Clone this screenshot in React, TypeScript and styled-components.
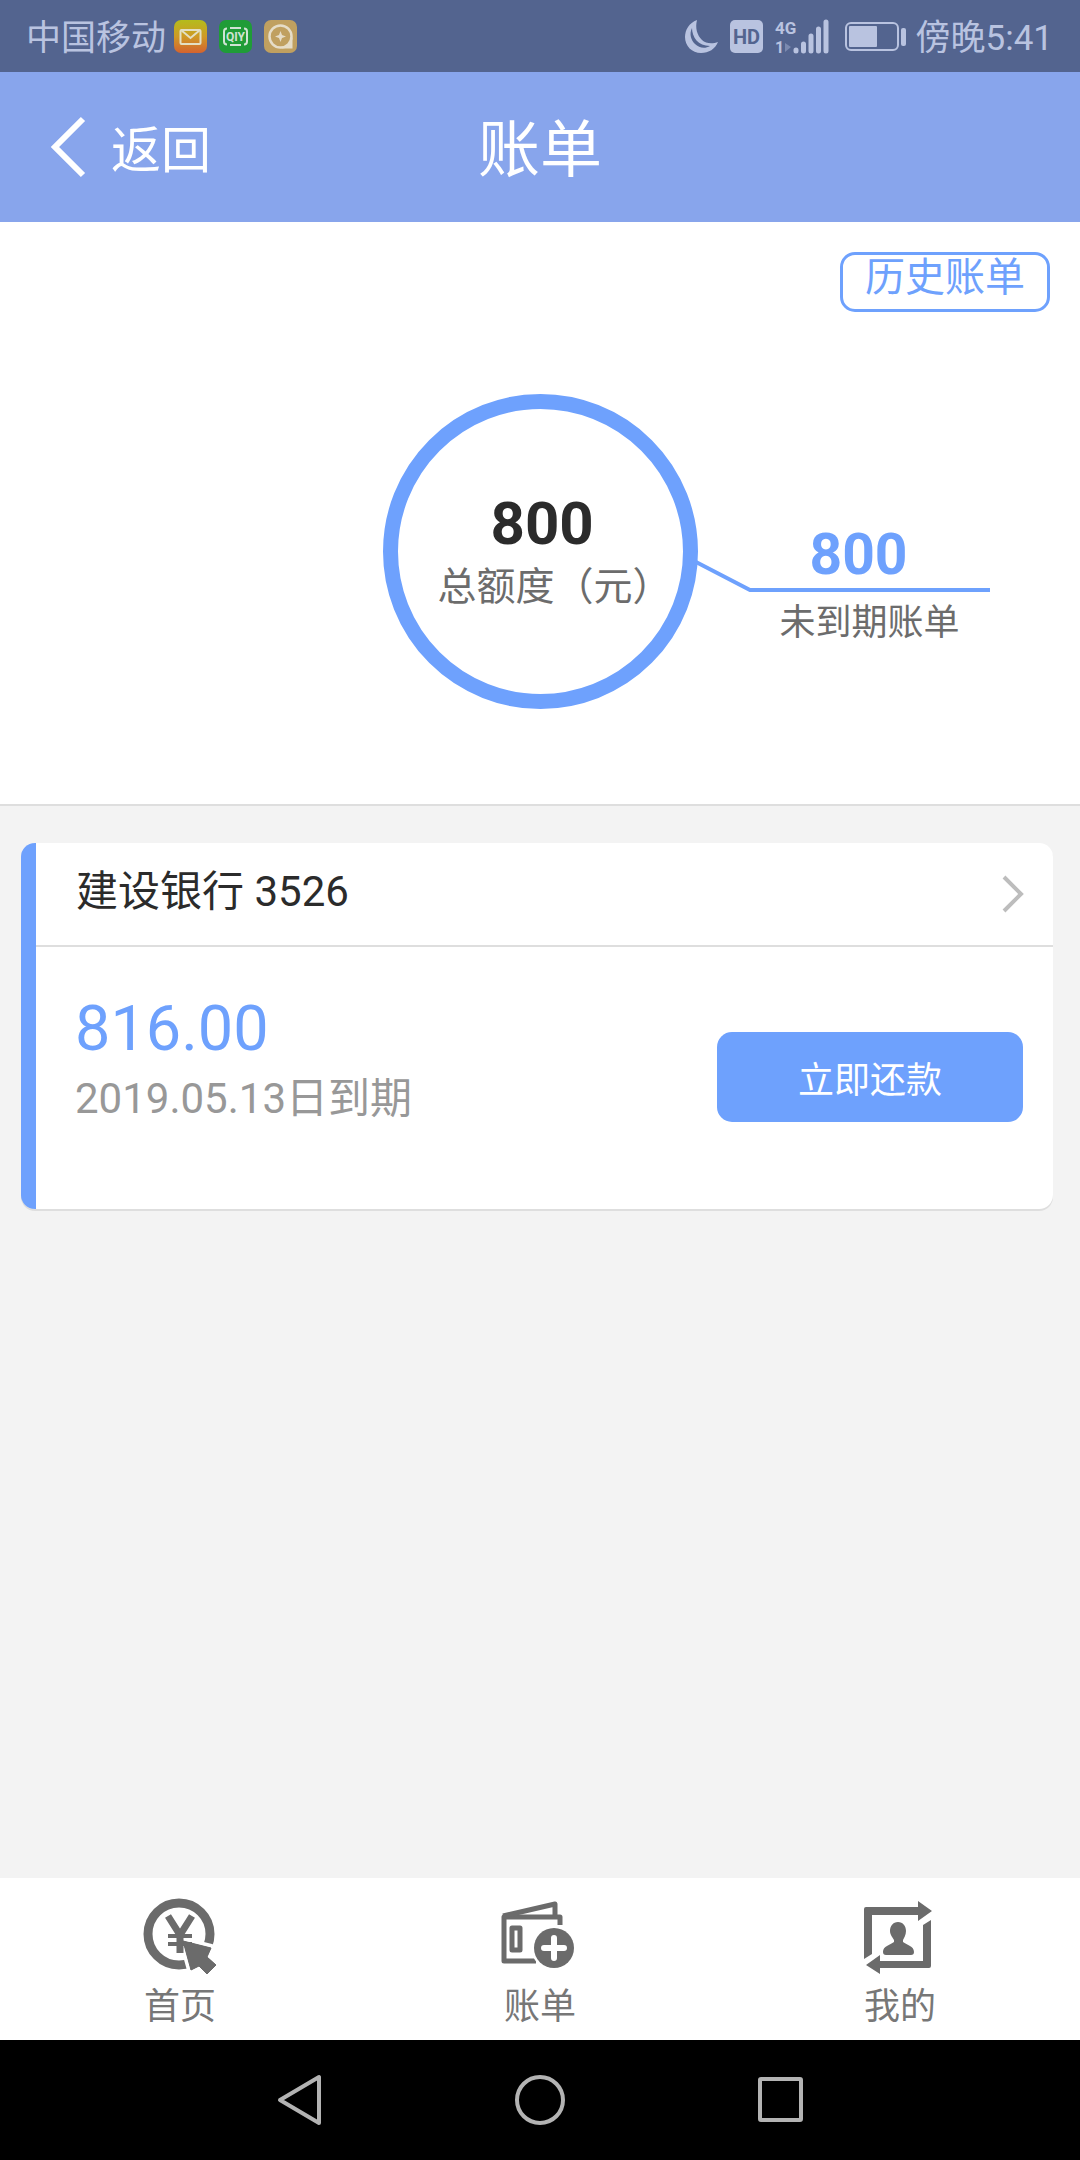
import React from "react";
import styled, { createGlobalStyle } from "styled-components";

const color = {
  status: "#53648f",
  statusInk: "#b9c3e0",
  header: "#88a5ec",
  brand: "#6ea1fd",
  ink: "#2b2b2b",
  label: "#6c6c6c",
  muted: "#989898",
  tab: "#777777",
  icon: "#6b6b6b",
  line: "#dedede",
  page: "#f3f3f3",
};

const GlobalStyle = createGlobalStyle`
  * { box-sizing: border-box; }
  body {
    margin: 0;
    font-family: Roboto, "Noto Sans CJK SC", sans-serif;
    background: ${color.page};
  }
  button {
    margin: 0;
    padding: 0;
    border: 0;
    background: none;
    font: inherit;
    color: inherit;
    cursor: pointer;
  }
  a { color: inherit; text-decoration: none; }
  h1, p { margin: 0; font-weight: 400; }
  svg { display: block; flex: none; overflow: visible; }
`;

const Page = styled.div`
  display: flex;
  flex-direction: column;
  min-height: 100vh;
`;

const StatusBar = styled.div`
  display: flex;
  align-items: center;
  justify-content: space-between;
  height: 72px;
  padding: 1px 27px 0 26px;
  background: ${color.status};
  color: ${color.statusInk};
`;

const StatusGroup = styled.div<{ $gap: number }>`
  display: flex;
  align-items: center;
  gap: ${(p) => p.$gap}px;
`;

const StatusText = styled.span`
  padding-top: 4px;
  font-size: 35px;
  line-height: 48px;
`;

const Header = styled.header`
  display: grid;
  grid-template-columns: 1fr auto 1fr;
  align-items: center;
  height: 150px;
  padding: 8px 50px 0;
  background: ${color.header};
  color: #ffffff;
`;

const BackButton = styled.button`
  display: flex;
  align-items: center;
  justify-self: start;
  gap: 23px;
  font-size: 50px;
  line-height: 72px;
`;

const Title = styled.h1`
  font-size: 62px;
  line-height: 90px;
`;

const Overview = styled.section`
  display: flex;
  flex-direction: column;
  padding: 30px 0 95px;
  background: #ffffff;
  border-bottom: 2px solid ${color.line};
`;

const HistoryButton = styled.button`
  display: flex;
  align-self: flex-end;
  justify-content: center;
  width: 210px;
  height: 60px;
  margin-right: 30px;
  border: 3px solid ${color.brand};
  border-radius: 15px;
  color: ${color.brand};
  font-size: 40px;
  line-height: 45px;
`;

const Chart = styled.div`
  display: grid;
  grid-template-columns: 1fr auto 1fr;
  margin-top: 82px;
`;

const Ring = styled.div`
  grid-column: 2;
  display: flex;
  flex-direction: column;
  align-items: flex-start;
  justify-content: center;
  width: 315px;
  height: 315px;
  padding: 0 0 2px 40px;
  border: 15px solid ${color.brand};
  border-radius: 50%;
`;

const Total = styled.strong`
  padding-left: 53px;
  color: ${color.ink};
  font-size: 60px;
  line-height: 72px;
`;

const Label = styled.span<{ $size: number }>`
  color: ${color.label};
  font-size: ${(p) => p.$size}px;
  line-height: 54px;
  white-space: nowrap;
`;

const Callout = styled.div`
  display: flex;
  align-items: flex-start;
  margin-top: 128px;
`;

const CalloutText = styled.div`
  display: flex;
  flex-direction: column;
  align-items: center;
  width: 240px;
`;

const Pending = styled.strong`
  align-self: stretch;
  margin-bottom: 4px;
  padding-right: 22px;
  border-bottom: 4px solid ${color.brand};
  color: ${color.brand};
  font-size: 57px;
  line-height: 66px;
  text-align: center;
`;

const Content = styled.main`
  flex: 1;
  padding: 37px 27px 37px 21px;
`;

const Card = styled.article`
  overflow: hidden;
  border-left: 15px solid ${color.brand};
  border-radius: 14px;
  background: #ffffff;
  box-shadow: 0 2px 0 ${color.line};
`;

const BankLink = styled.a`
  display: flex;
  align-items: center;
  justify-content: space-between;
  padding: 19px 30px 23px 40px;
  border-bottom: 2px solid ${color.line};
  color: ${color.ink};
  font-size: 42px;
  line-height: 60px;
`;

const CardBody = styled.div`
  display: flex;
  align-items: flex-end;
  justify-content: space-between;
  padding: 46px 30px 76px 39px;
`;

const Amount = styled.p`
  color: ${color.brand};
  font-size: 63px;
  line-height: 72px;
`;

const DueDate = styled.p`
  color: ${color.muted};
  font-size: 42px;
  line-height: 68px;
`;

const RepayButton = styled.button`
  width: 306px;
  height: 90px;
  margin-bottom: 11px;
  border-radius: 15px;
  background: ${color.brand};
  color: #ffffff;
  font-size: 36px;
`;

const TabBar = styled.nav`
  display: grid;
  grid-template-columns: repeat(3, 1fr);
  background: #ffffff;
`;

const Tab = styled.a`
  display: flex;
  flex-direction: column;
  align-items: center;
  gap: 5px;
  padding: 19px 0 6px;
  color: ${color.tab};
  font-size: 36px;
  line-height: 54px;
`;

const SystemNav = styled.div`
  display: flex;
  justify-content: center;
  background: #000000;
`;

const SystemKey = styled.button`
  display: flex;
  align-items: center;
  justify-content: center;
  width: 240px;
  height: 120px;
`;

const MailIcon = () => (
  <svg width="33" height="33" viewBox="0 0 33 33">
    <defs>
      <linearGradient id="mail" x1="0" y1="0" x2="0" y2="1">
        <stop offset="0" stopColor="#b4bc1c" />
        <stop offset="0.5" stopColor="#cf9a26" />
        <stop offset="1" stopColor="#d4632f" />
      </linearGradient>
    </defs>
    <rect width="33" height="33" rx="7" fill="url(#mail)" />
    <g fill="none" stroke="#e3dfc4" strokeWidth="2">
      <rect x="6.500" y="10" width="20" height="14" rx="1" />
      <path d="M7 10l9.500 8 9.500-8" />
    </g>
  </svg>
);

const VideoIcon = () => (
  <svg width="33" height="33" viewBox="0 0 33 33">
    <rect width="33" height="33" rx="7" fill="#1f9c37" />
    <path
      d="M11 8h11M11 25h11M8 8.500q-3 0-3 3v10q0 3 3 3M25 8.500q3 0 3 3v10q0 3-3 3"
      fill="none"
      stroke="#cfe3d3"
      strokeWidth="2"
    />
    <text x="16.500" y="21" textAnchor="middle" fontFamily="Roboto, sans-serif" fontSize="12" fontWeight="700" fill="#cfe3d3">
      QIY
    </text>
  </svg>
);

const CompassIcon = () => (
  <svg width="33" height="33" viewBox="0 0 33 33">
    <rect width="33" height="33" rx="7" fill="#c0a060" />
    <circle cx="16.500" cy="16.500" r="11" fill="none" stroke="#e6ddc8" strokeWidth="2.500" />
    <path d="M28.500 17v11.500H17q9-2 11.500-11.500z" fill="#e6ddc8" />
    <path d="M16.500 11l1.500 4 4 1.500-4 1.500-1.500 4-1.500-4-4-1.500 4-1.500z" fill="#e6ddc8" />
  </svg>
);

const MoonIcon = () => (
  <svg width="33" height="34" viewBox="0 0 33 34">
    <path
      d="M12 0C4 3 0 10 0 17c0 9 7 16 16 16 8 0 14-4 17-11-5 2-12 2-16-2-5-5-7-12-5-20z"
      fill={color.statusInk}
    />
    <path d="M7 8c0 9 6 18 18 18-5 3-11 2-15-2C6 20 4 14 7 8z" fill={color.status} />
  </svg>
);

const HdIcon = () => (
  <svg width="33" height="33" viewBox="0 0 33 33">
    <rect width="33" height="33" rx="5" fill={color.statusInk} />
    <text x="16.500" y="24" textAnchor="middle" fontFamily="Roboto, sans-serif" fontSize="20" fontWeight="700" fill={color.status}>
      HD
    </text>
  </svg>
);

const SignalIcon = () => (
  <svg width="54" height="36" viewBox="0 0 54 36">
    <g fill={color.statusInk} fontFamily="Roboto, sans-serif" fontWeight="700">
      <text x="0" y="15" fontSize="17">4G</text>
      <text x="0" y="34" fontSize="16">1</text>
    </g>
    <path d="M10 24l6 4-6 5z" fill={color.statusInk} opacity="0.400" />
    <g stroke={color.statusInk} strokeWidth="5" strokeLinecap="round">
      <path d="M21 31v1M28.500 25v7M36 17v15M43.500 10v22M51 3v29" />
    </g>
  </svg>
);

const BatteryIcon = () => (
  <svg width="61" height="30" viewBox="0 0 61 30">
    <rect x="1" y="1" width="52" height="27" rx="5" fill="none" stroke={color.statusInk} strokeWidth="2" />
    <rect x="4" y="4" width="28" height="21" rx="1" fill={color.statusInk} />
    <rect x="56" y="6" width="5" height="18" rx="2" fill={color.statusInk} />
  </svg>
);

const BackIcon = () => (
  <svg width="38" height="68" viewBox="0 0 38 68">
    <path d="M33 2L5 30l28 28" fill="none" stroke="#ffffff" strokeWidth="6" />
  </svg>
);

const RowArrow = () => (
  <svg width="22" height="60" viewBox="0 0 22 60">
    <path d="M3 15l17 17L3 49" fill="none" stroke="#bdbdbd" strokeWidth="4" />
  </svg>
);

const LeaderLine = () => (
  <svg width="52" height="70" viewBox="0 0 52 70">
    <path d="M-2 40L52 68h2" fill="none" stroke={color.brand} strokeWidth="4" />
  </svg>
);

const HomeIcon = () => (
  <svg width="78" height="78" viewBox="0 0 78 78">
    <circle cx="38" cy="37" r="31" fill="none" stroke={color.icon} strokeWidth="9" />
    <path
      d="M42 44l28 7-4 9 9 8-9 9-8-8-8 4z"
      fill={color.icon}
      stroke="#ffffff"
      strokeWidth="8"
      paintOrder="stroke"
      strokeLinejoin="round"
    />
    <path d="M27 19l12 19 12-19M39 37v19" fill="none" stroke={color.icon} strokeWidth="7" />
    <path d="M27 39h24M27 47h24" fill="none" stroke={color.icon} strokeWidth="4" />
    <path d="M42 44l28 7-4 9 9 8-9 9-8-8-8 4z" fill={color.icon} stroke={color.icon} strokeLinejoin="round" />
  </svg>
);

const BillIcon = () => (
  <svg width="78" height="78" viewBox="0 0 78 78">
    <g fill="none" stroke={color.icon} strokeWidth="5" strokeLinejoin="round">
      <path d="M35 64H3V20h56v8" />
      <path d="M2 19L54 7v13" />
      <rect x="11" y="31" width="8" height="22" />
    </g>
    <circle cx="53" cy="51" r="20" fill={color.icon} stroke="#ffffff" strokeWidth="5" paintOrder="stroke" />
    <path d="M43 51h20M53 41v20" stroke="#ffffff" strokeWidth="6" strokeLinecap="round" />
  </svg>
);

const MineIcon = () => (
  <svg width="78" height="78" viewBox="0 0 78 78">
    <g fill={color.icon}>
      <path d="M5 10h52V4l14 10-14 10v-6H11v39l-8 5V12q0-2 2-2z" />
      <path d="M62 28l8-5v46q0 2-2 2H19v6L5 68l14-10v6h43z" />
      <path d="M37 25c5 0 8 4 8 9 0 4-2 7-3 9v2c4 3 11 4 11 10 0 2-1 3-3 3H25c-2 0-3-1-3-3 0-6 7-7 11-10v-2c-1-2-4-5-4-9 0-5 3-9 8-9z" />
    </g>
  </svg>
);

const tabs = [
  { name: "首页", href: "#home", Icon: HomeIcon },
  { name: "账单", href: "#bill", Icon: BillIcon },
  { name: "我的", href: "#mine", Icon: MineIcon },
];

const systemKeys = [
  { name: "返回", shape: <path d="M44 3v46L5 26z" /> },
  { name: "主屏幕", shape: <circle cx="25" cy="26" r="23" /> },
  { name: "最近任务", shape: <rect x="5" y="5" width="41" height="41" rx="1" /> },
];

export default function App() {
  return (
    <Page>
      <GlobalStyle />
      <StatusBar>
        <StatusGroup $gap={12}>
          <StatusGroup $gap={8}>
            <StatusText>中国移动</StatusText>
            <MailIcon />
          </StatusGroup>
          <VideoIcon />
          <CompassIcon />
        </StatusGroup>
        <StatusGroup $gap={16}>
          <StatusGroup $gap={12}>
            <MoonIcon />
            <HdIcon />
            <SignalIcon />
          </StatusGroup>
          <StatusGroup $gap={10}>
            <BatteryIcon />
            <StatusText>傍晚5:41</StatusText>
          </StatusGroup>
        </StatusGroup>
      </StatusBar>

      <Header>
        <BackButton type="button">
          <BackIcon />
          返回
        </BackButton>
        <Title>账单</Title>
      </Header>

      <Overview>
        <HistoryButton type="button">历史账单</HistoryButton>
        <Chart>
          <Ring>
            <Total>800</Total>
            <Label $size={39}>总额度（元）</Label>
          </Ring>
          <Callout>
            <LeaderLine />
            <CalloutText>
              <Pending>800</Pending>
              <Label $size={36}>未到期账单</Label>
            </CalloutText>
          </Callout>
        </Chart>
      </Overview>

      <Content>
        <Card>
          <BankLink href="#bank">
            建设银行 3526
            <RowArrow />
          </BankLink>
          <CardBody>
            <div>
              <Amount>816.00</Amount>
              <DueDate>2019.05.13日到期</DueDate>
            </div>
            <RepayButton type="button">立即还款</RepayButton>
          </CardBody>
        </Card>
      </Content>

      <TabBar>
        {tabs.map(({ name, href, Icon }) => (
          <Tab key={name} href={href}>
            <Icon />
            {name}
          </Tab>
        ))}
      </TabBar>

      <SystemNav>
        {systemKeys.map(({ name, shape }) => (
          <SystemKey key={name} type="button" aria-label={name}>
            <svg width="50" height="52" viewBox="0 0 50 52" fill="none" stroke="#b3b3b3" strokeWidth="4" strokeLinejoin="round">
              {shape}
            </svg>
          </SystemKey>
        ))}
      </SystemNav>
    </Page>
  );
}
